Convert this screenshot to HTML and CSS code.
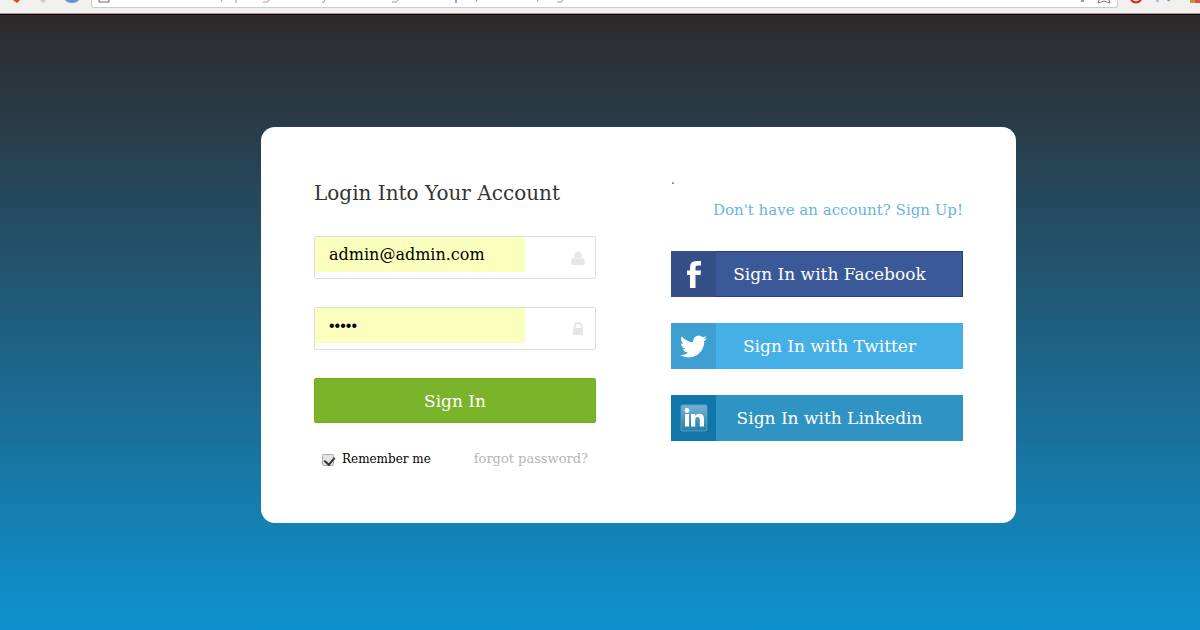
FILE: index.html
```html
<!doctype html>
<html lang="en">

<head>
    <meta charset="utf-8">
    <meta name="viewport" content="width=device-width, initial-scale=1">
    <title>Login</title>
    <link rel="stylesheet" href="styles.css">
</head>

<body>

  <!-- browser toolbar -->
  <header class="toolbar">
    <svg class="nav-icons" width="91" height="8" viewBox="0 0 91 8">
      <path d="M13 0h7l-3 3z" fill="#d9431b"/>
      <path d="M40 0h6l-3 3z" fill="#c9c7c5"/>
      <path d="M65 0h14q-2 3-7 3t-7-3z" fill="#6399cf"/>
    </svg>
    <div class="address">
      <svg width="480" height="5" viewBox="0 0 480 5">
        <path d="M7 0v2h10V0" fill="none" stroke="#666" stroke-width="1"/>
        <g fill="none" stroke="#999" stroke-width="1">
          <path d="M130 0l-1 2M144 0v3M171 2h4q2-1 2-2M230 2h2l1-2M300 2h4q2-1 2-2M385 0l-1 2M446 0l-1 2M465 2h4q2-1 2-2"/>
          <path d="M364 0v3" stroke="#8fa5c9" stroke-width="2"/>
        </g>
      </svg>
      <svg width="40" height="5" viewBox="0 0 40 5">
        <path d="M4 0h3v2H4z" fill="#999"/>
        <path d="M22 0l-1 3 6-2 6 2-1-3" fill="none" stroke="#777"/>
      </svg>
    </div>
    <svg class="plugins" width="82" height="8" viewBox="0 0 82 8">
      <path d="M13 0q5 5 10 0" fill="none" stroke="#d81e1e" stroke-width="2"/>
      <path d="M38 1h3M49 0l3 1" stroke="#4b9fd0" stroke-width="1"/>
      <path d="M72 0h5v3h-5z" fill="#c8962d"/>
      <path d="M77 0h5v3h-5z" fill="#d9553f"/>
    </svg>
  </header>

  <main>
    <div class="login-box">

      <form class="login-form">
        <h1>Login Into Your Account</h1>

        <div class="field">
          <input type="email" aria-label="Email" value="admin@admin.com">
          <svg width="14" height="14" viewBox="0 0 14 14">
            <circle cx="7" cy="4" r="3.6"/>
            <path d="M3.4 6.6Q7 9.6 10.6 6.6Q14 7.6 14 11.6Q14 14 12 14H2Q0 14 0 11.6Q0 7.6 3.4 6.6z"/>
          </svg>
        </div>

        <div class="field">
          <input type="password" aria-label="Password" value="admin">
          <svg width="14" height="14" viewBox="0 0 14 14">
            <path d="M3.5 7V4.5a3.5 3.5 0 0 1 7 0V7" fill="none" stroke="#e6e6e6" stroke-width="2"/>
            <rect x="2" y="6" width="10" height="7" rx="1"/>
          </svg>
        </div>

        <button type="submit" class="sign-in">Sign In</button>

        <div class="options">
          <label class="remember">
            <input type="checkbox" checked>
            <span>Remember me</span>
          </label>
          <a href="#" class="forgot">forgot password?</a>
        </div>
      </form>

      <div class="social">
        <p class="dot">.</p>
        <a href="#" class="sign-up">Don't have an account? Sign Up!</a>

        <button type="button" class="social-button facebook">
          <span class="icon">
            <svg width="28" height="28" viewBox="0 0 28 28" fill="#fff">
              <path d="M10 28V15H7V10.500h3V7.4Q10 1 16.500 1H21V5.500H17.600Q15.500 5.500 15.500 7.200V10.500H21L20.500 15H15.500V28z"/>
            </svg>
          </span>
          <span class="text">Sign In with Facebook</span>
        </button>

        <button type="button" class="social-button twitter">
          <span class="icon">
            <svg width="27" height="27" viewBox="0 0 24 24" fill="#fff">
              <path d="M23.950 4.570a10 10 0 0 1-2.820.770 4.960 4.960 0 0 0 2.160-2.720c-.950.550-2 .950-3.130 1.180a4.920 4.920 0 0 0-8.380 4.480C7.690 8.090 4.070 6.130 1.640 3.160a4.920 4.920 0 0 0 1.520 6.570 4.900 4.900 0 0 1-2.230-.610v.060a4.920 4.920 0 0 0 3.950 4.830 5 5 0 0 1-2.210.080 4.940 4.940 0 0 0 4.600 3.420A9.870 9.870 0 0 1 0 19.540a13.990 13.990 0 0 0 7.550 2.210c9.050 0 14-7.500 14-13.980 0-.210 0-.420-.020-.630a9.900 9.900 0 0 0 2.420-2.570z"/>
            </svg>
          </span>
          <span class="text">Sign In with Twitter</span>
        </button>

        <button type="button" class="social-button linkedin">
          <span class="icon">
            <svg width="28" height="28" viewBox="0 0 28 28">
              <defs>
                <linearGradient id="tile" x1="0" y1="0" x2="0" y2="1">
                  <stop offset="0" stop-color="#72b5d3"/>
                  <stop offset="1" stop-color="#257fa9"/>
                </linearGradient>
              </defs>
              <rect x="0" y="1" width="28" height="27" rx="2" fill="#0b5f8c"/>
              <rect x="1" y="1" width="26" height="26" rx="1" fill="url(#tile)" stroke="#5aa6c9"/>
              <g fill="#fff">
                <circle cx="7" cy="6.500" r="2.400"/>
                <rect x="5" y="10" width="4" height="12.500"/>
                <path d="M11 10h4v1.700q1.500-2 4.300-2 4.700 0 4.700 5.300v7.500h-4.200v-6.800q0-2.700-2.200-2.700-2.400 0-2.400 2.900v6.600H11z"/>
              </g>
            </svg>
          </span>
          <span class="text">Sign In with Linkedin</span>
        </button>
      </div>

    </div>
  </main>

</body>
</html>
```

FILE: styles.css
```css
* {
  box-sizing: border-box;
}

body {
  margin: 0;
  min-height: 100vh;
  font-family: "DejaVu Serif", serif;
  background: linear-gradient(#2f2727, #0f92d0);
}

.toolbar {
  display: flex;
  align-items: flex-start;
  height: 15px;
  background: #f1f0ef;
  border-bottom: 1px solid #1d0508;
  box-shadow: inset 0 -1px #999;
}

.toolbar svg {
  display: block;
  flex: none;
}

.address {
  flex: 1;
  display: flex;
  justify-content: space-between;
  height: 8px;
  background: #fff;
  border: 1px solid #ccc;
  border-top: 0;
  border-radius: 0 0 3px 3px;
}

main {
  padding: 112px 0 40px 77px;
}

.login-box {
  display: grid;
  grid-template-columns: 282fr 292fr;
  column-gap: 75px;
  max-width: 755px;
  min-height: 396px;
  margin: 0 auto;
  padding: 51px 53px 48px;
  background: #fff;
  border-radius: 14px;
}

h1 {
  margin: 0 0 28px;
  font-size: 20px;
  font-weight: normal;
  line-height: 30px;
  color: #333;
  white-space: nowrap;
}

.field {
  display: flex;
  justify-content: space-between;
  height: 43px;
  margin-bottom: 28px;
  border: 1px solid #ddd;
  border-radius: 2px;
}

.field input {
  width: 75%;
  height: 35px;
  padding: 0 14px;
  border: 0;
  font-family: inherit;
  font-size: 16px;
  color: #000;
  background: #faffbd;
}

.field input[type="password"] {
  font-family: "Liberation Sans", sans-serif;
  font-size: 16px;
}

.field svg {
  align-self: center;
  margin-right: 10px;
  fill: #e6e6e6;
}

.sign-in {
  display: block;
  width: 100%;
  height: 45px;
  padding: 0;
  border: 1px solid #70ad1e;
  border-radius: 2px;
  font-family: inherit;
  font-size: 17px;
  color: #fff;
  background: #7ab42b;
  cursor: pointer;
}

.options {
  display: flex;
  justify-content: space-between;
  align-items: center;
  margin-top: 26px;
  padding: 0 8px;
  line-height: 20px;
  white-space: nowrap;
}

.remember {
  display: flex;
  align-items: center;
  gap: 8px;
  font-size: 12px;
}

.remember input {
  appearance: none;
  width: 12px;
  height: 12px;
  margin: 2px 0 0;
  border: 1px solid #aaa;
  border-radius: 2px;
  background: #e4e4e4;
}

.remember input:checked::before {
  content: "";
  display: block;
  width: 5px;
  height: 8px;
  margin-left: 3px;
  border: solid #333;
  border-width: 0 2px 2px 0;
  transform: rotate(40deg);
}

.forgot {
  font-size: 13px;
  color: #b5b5b5;
  text-decoration: none;
}

.social {
  display: flex;
  flex-direction: column;
}

.dot {
  margin: 0;
  font-size: 12px;
  line-height: 4px;
  color: #633;
}

.sign-up {
  align-self: flex-end;
  margin: 18px 0 31px;
  font-size: 15px;
  line-height: 20px;
  color: #67b5e2;
  text-decoration: none;
  white-space: nowrap;
}

.social-button {
  display: flex;
  height: 46px;
  margin-bottom: 26px;
  padding: 0;
  border: 0;
  font-family: inherit;
  font-size: 17px;
  color: #fff;
  cursor: pointer;
}

.social-button .icon {
  display: flex;
  align-items: center;
  justify-content: center;
  width: 45px;
  height: 100%;
}

.social-button .text {
  flex: 1;
  align-self: center;
  padding-right: 20px;
  white-space: nowrap;
}

.facebook {
  background: #3b5998;
  box-shadow: inset 0 0 0 1px #1f4382;
}

.facebook .icon {
  background: #354f88;
}

.twitter {
  background: #45b0e5;
}

.twitter .icon {
  background: #3e9fd0;
}

.linkedin {
  background: #2f93c4;
}

.linkedin .icon {
  background: #1177aa;
}
```
